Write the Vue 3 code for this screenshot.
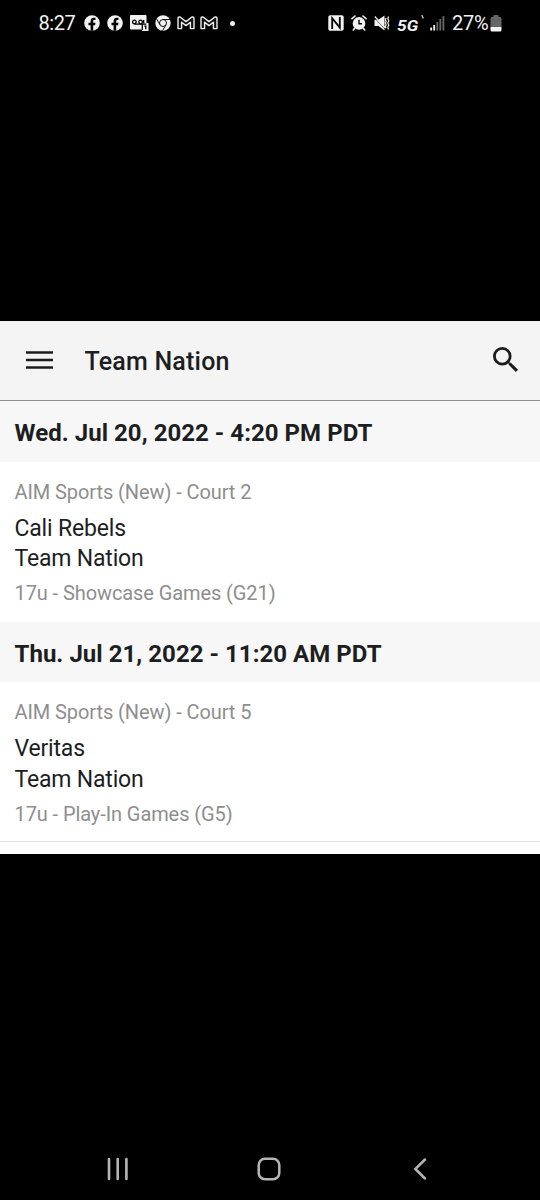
<script setup>
const games = [
  {
    date: 'Wed. Jul 20, 2022 - 4:20 PM PDT',
    venue: 'AIM Sports (New) - Court 2',
    home: 'Cali Rebels',
    away: 'Team Nation',
    division: '17u - Showcase Games (G21)',
  },
  {
    date: 'Thu. Jul 21, 2022 - 11:20 AM PDT',
    venue: 'AIM Sports (New) - Court 5',
    home: 'Veritas',
    away: 'Team Nation',
    division: '17u - Play-In Games (G5)',
  },
]
</script>

<template>
  <div class="phone">
    <div class="status">
      <div class="left">
        <span class="clock">8:27</span>
        <svg v-for="n in 2" :key="'f' + n" class="fb" viewBox="0 0 16 16" width="16" height="16">
          <circle cx="8" cy="8" r="7.8" fill="#f2f2f2" />
          <path d="M6.600 15.800V10.200H4.500V7.700h2.100V6.200c0-2.300 1.300-3.400 3.200-3.400.8 0 1.700.1 1.700.1v2.100h-1c-1 0-1.300.5-1.300 1.100v1.600h2.300l-.4 2.500H9.200v5.600z" fill="#000" />
        </svg>
        <svg class="voicemail" viewBox="0 0 19 16" width="19" height="16">
          <path d="M1 0h14.500q1 0 1 1v7h2v8H12v-1.500H1Q0 14.500 0 13.500V1Q0 0 1 0z" fill="#f2f2f2" />
          <g fill="none" stroke="#000" stroke-width="1.300">
            <circle cx="4.400" cy="7" r="1.800" />
            <circle cx="10.600" cy="7" r="1.800" />
            <path d="M4.400 9.200h7.600M13.700 8.300V5M12.300 15V9.200h4M14.300 11.200h1.500v3" />
          </g>
        </svg>
        <svg class="chrome" viewBox="0 0 16 16" width="16" height="16">
          <circle cx="8" cy="8" r="7.700" fill="#f2f2f2" />
          <circle cx="8" cy="8" r="3.500" fill="#f2f2f2" stroke="#111" stroke-width="1" />
          <path d="M8 4.500h7M4.970 9.750 1.500 3.700M11.030 9.750 7.500 15.700" stroke="#111" stroke-width="1" />
        </svg>
        <svg v-for="n in 2" :key="'m' + n" class="mail" viewBox="0 0 18 14" width="18" height="14">
          <path d="M1 12.600V2.400Q1 1 2.300 1H3.100L9 5.600 14.900 1h.8Q17 1 17 2.400v10.200h-3.600V6.200L9 9.600 4.600 6.200v6.400z" fill="#111" stroke="#f0f0f0" stroke-width="1.400" stroke-linejoin="round" />
        </svg>
        <i class="dot"></i>
      </div>
      <div class="right">
        <svg class="nfc" viewBox="0 0 16 16" width="16" height="16">
          <rect x=".3" y=".3" width="15.400" height="15.400" rx="1.800" fill="#f2f2f2" />
          <path d="M4.200 14V3.200l7.600 9.400V2" fill="none" stroke="#000" stroke-width="1.800" />
        </svg>
        <svg class="alarm" viewBox="0 0 16 16" width="16" height="16">
          <circle cx="8" cy="8.400" r="6.300" fill="#f2f2f2" />
          <path d="M1 3.700 4 1M15 3.700 12 1M3.700 13.200 2.300 15M12.300 13.200l1.400 1.800" stroke="#f2f2f2" stroke-width="1.600" stroke-linecap="round" />
          <path d="M8 4.700v4h3" fill="none" stroke="#000" stroke-width="1.400" />
        </svg>
        <svg class="mute" viewBox="0 0 16 16" width="16" height="16">
          <path d="M.5 4.800h4L10.500.5v15L4.500 11h-4z" fill="#f2f2f2" />
          <path d="M0 2.200 10.500 13.700" stroke="#000" stroke-width=".6" />
          <path d="M.8 1.500 11 12.700" stroke="#f2f2f2" stroke-width="1.200" />
          <path d="m12 3-.7 1.700.9 1.700-.9 1.700.9 1.700-.9 1.700.7 1.700M14.500 1.500l-.7 2.200 1 2.100-1 2.100 1 2.100-1 2.100.7 2.400" fill="none" stroke="#f2f2f2" stroke-width="1.200" />
        </svg>
        <span class="network">5G</span>
        <svg class="tick" viewBox="0 0 4 6" width="4" height="6">
          <path d="m.8 1 1.500 3.500" stroke="#ddd" stroke-width="1.200" />
        </svg>
        <svg class="signal" viewBox="0 0 15 16" width="15" height="16">
          <path d="M1.200 15.500v-3M4.200 15.500V10" stroke="#f5f5f5" stroke-width="1.800" />
          <path d="M7.300 15.500V7M10.300 15.500V4M13.400 15.500V1" stroke="#686868" stroke-width="1.800" />
        </svg>
        <span class="percent">27%</span>
        <svg class="battery" viewBox="0 0 12 17" width="12" height="17">
          <path d="M3.500 0h5v2H10q1.500 0 1.500 1.500V12H.5V3.500Q.5 2 2 2h1.500z" fill="#666" />
          <path d="M.5 12h11v3q0 1.500-1.500 1.500H2Q.5 16.500.5 15z" fill="#f5f5f5" />
        </svg>
      </div>
    </div>

    <main class="screen">
      <header class="bar">
        <svg class="menu" viewBox="0 0 27 18" width="27" height="18">
          <path d="M0 1.500h27M0 9h27M0 16.500h27" stroke="#1c1c1c" stroke-width="2.500" />
        </svg>
        <h1>Team Nation</h1>
        <svg class="search" viewBox="3 3 17.490 17.490" width="25" height="25">
          <path d="M15.500 14h-.79l-.28-.27A6.471 6.471 0 0 0 16 9.500 6.500 6.500 0 1 0 9.500 16c1.610 0 3.090-.59 4.230-1.570l.27.28v.79l5 4.990L20.490 19l-4.990-5zm-6 0C7.010 14 5 11.990 5 9.500S7.010 5 9.500 5 14 7.010 14 9.500 11.990 14 9.500 14z" fill="#1c1c1c" />
        </svg>
      </header>
      <section v-for="game in games" :key="game.date">
        <h2>{{ game.date }}</h2>
        <div class="game">
          <p class="meta">{{ game.venue }}</p>
          <p class="team">{{ game.home }}</p>
          <p class="team">{{ game.away }}</p>
          <p class="meta division">{{ game.division }}</p>
        </div>
      </section>
      <div class="end"></div>
    </main>

    <nav class="keys">
      <svg viewBox="0 0 22 24" width="22" height="24">
        <path d="M2 2v20M10.700 2v20M19.400 2v20" stroke="#b5b5b5" stroke-width="2.600" stroke-linecap="round" />
      </svg>
      <svg class="home" viewBox="0 0 24 24" width="24" height="24">
        <rect x="1.700" y="1.700" width="20.600" height="20.600" rx="6.300" fill="none" stroke="#b5b5b5" stroke-width="2.500" />
      </svg>
      <svg viewBox="0 0 14 24" width="14" height="24">
        <path d="M12 2.500 2.300 12 12 21.500" fill="none" stroke="#b5b5b5" stroke-width="2.500" stroke-linecap="round" />
      </svg>
    </nav>
  </div>
</template>

<style>
body {
  margin: 0;
  background: #000;
}
</style>

<style scoped>
.phone {
  display: flex;
  flex-direction: column;
  box-sizing: border-box;
  width: 540px;
  height: 1200px;
  background: #000;
  font-family: Roboto, "Liberation Sans", sans-serif;
  overflow: hidden;
}
svg {
  display: block;
  flex: none;
}
.status {
  display: flex;
  justify-content: space-between;
  height: 46px;
  padding: 0 38px 0 38.5px;
  box-sizing: border-box;
  color: #f2f2f2;
}
.left,
.right {
  display: flex;
  align-items: center;
}
.clock {
  width: 45px;
  font-size: 20px;
  letter-spacing: -0.4px;
  line-height: 46px;
}
.fb {
  margin-right: 7px;
}
.voicemail {
  margin-right: 6px;
}
.chrome {
  margin-right: 6px;
}
.mail {
  margin-right: 5.500px;
}
.dot {
  width: 5px;
  height: 5px;
  margin-left: 6px;
  border-radius: 50%;
  background: #f2f2f2;
}
.nfc,
.alarm {
  margin-right: 7px;
}
.mute {
  margin-right: 7px;
}
.network {
  width: 24px;
  padding-top: 6px;
  font-size: 15.500px;
  font-style: italic;
  font-weight: 700;
  transform: scaleX(1.12);
  transform-origin: left;
}
.tick {
  margin: -12px 5px 0 0;
}
.signal {
  margin-right: 7px;
}
.percent {
  width: 38px;
  font-size: 20px;
  letter-spacing: -0.3px;
}
.screen {
  height: 533px;
  margin-top: 275px;
  background: #fff;
  color: #1d1e1f;
}
.bar {
  display: flex;
  align-items: center;
  box-sizing: border-box;
  height: 80px;
  padding: 0 22px 0 26px;
  border-bottom: 1px solid #8c8c8c;
  background: #f4f4f4;
}
.menu,
.search {
  margin-top: -2px;
}
h1,
h2,
p {
  margin: 0;
}
h1 {
  flex: 1;
  margin: 2px 0 0 31.500px;
  font-size: 25px;
  font-weight: 500;
  letter-spacing: 0.2px;
  line-height: 30px;
}
h2 {
  height: 60.600px;
  padding-left: 14.500px;
  background: #f7f7f7;
  font-size: 24px;
  font-weight: 700;
  letter-spacing: 0.04px;
  line-height: 64.500px;
}
.game {
  box-sizing: border-box;
  height: 160.100px;
  padding: 16px 14.500px 0;
}
.meta {
  color: #8e8e8e;
  font-size: 20px;
  letter-spacing: -0.09px;
  line-height: 28px;
}
.team {
  font-size: 23px;
  letter-spacing: -0.18px;
  line-height: 30.300px;
}
.meta + .team {
  margin-top: 8px;
}
.division {
  margin-top: 5px;
}
section:nth-of-type(2) .game {
  height: 158.700px;
}
.end {
  border-top: 1px solid #dedede;
}
.keys {
  display: flex;
  align-items: center;
  justify-content: space-between;
  height: 24px;
  margin-top: auto;
  padding: 0 113px 19px 107px;
}
.home {
  margin-right: 4px;
}
</style>
